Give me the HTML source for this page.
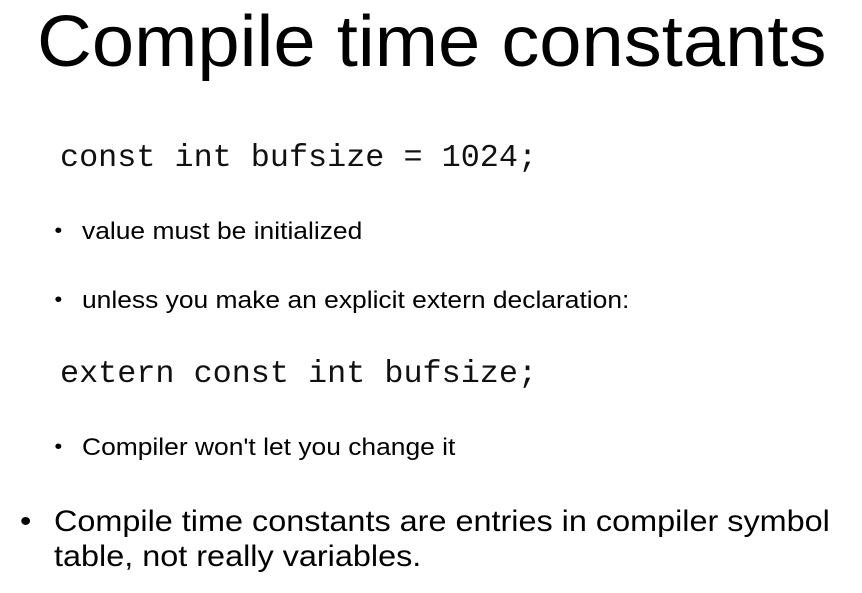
<!DOCTYPE html>
<html><head><meta charset="utf-8"><style>
body{margin:0;width:862px;height:593px;background:#fff;position:relative;overflow:hidden;font-family:"Liberation Sans",sans-serif;color:#000}
div{position:absolute;white-space:nowrap;line-height:1;transform-origin:0 0}
.t{left:37px;top:6px;font-size:72px;transform:scaleX(1.055)}
.c{font-family:"Liberation Mono",monospace;font-size:31.8px;left:60px;color:#111}
.s{font-size:24px;left:82px;transform:scaleX(1.10)}
.s::before{content:"•";position:absolute;left:-25px;font-size:20px;top:1px}
.b{font-size:29.5px;left:54px;transform:scaleX(1.098)}
.b1::before{content:"•";position:absolute;left:-31px}
</style></head><body>
<div class="t">Compile time constants</div>
<div class="c" style="top:143px">const int bufsize = 1024;</div>
<div class="s" style="top:220px">value must be initialized</div>
<div class="s" style="top:289px">unless you make an explicit extern declaration:</div>
<div class="c" style="top:359px">extern const int bufsize;</div>
<div class="s" style="top:436px">Compiler won't let you change it</div>
<div class="b b1" style="top:507px">Compile time constants are entries in compiler symbol</div>
<div class="b" style="top:542px">table, not really variables.</div>
</body></html>
